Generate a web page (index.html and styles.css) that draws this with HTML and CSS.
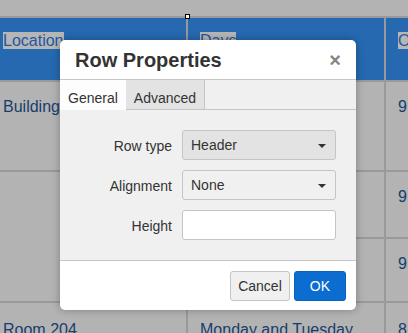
FILE: index.html
```html
<!DOCTYPE html>
<html lang="en">
<head>
    <meta charset="UTF-8">
    <meta name="viewport" content="width=device-width, initial-scale=1.0">
    <title>Row Properties</title>
    <link rel="stylesheet" href="styles.css">
</head>
<body>
    <div class="page">
        <table class="sheet">
            <tr class="headrow">
                <td class="c1"><span class="sel">Location</span></td>
                <td class="c2"><span class="sel">Days</span></td>
                <td class="c3"><span class="sel">O</span></td>
            </tr>
            <tr class="r1">
                <td>Building</td>
                <td></td>
                <td>9</td>
            </tr>
            <tr class="r2">
                <td rowspan="2"></td>
                <td></td>
                <td>9</td>
            </tr>
            <tr class="r3">
                <td></td>
                <td>9</td>
            </tr>
            <tr class="r4">
                <td>Room 204</td>
                <td>Monday and Tuesday</td>
                <td>8</td>
            </tr>
        </table>
        <div class="handle"></div>

        <div class="dialog">
            <div class="dlg-head">
                <h1 class="dlg-title">Row Properties</h1>
                <span class="close">&times;</span>
            </div>
            <div class="tabs">
                <div class="tab active">General</div>
                <div class="tab">Advanced</div>
            </div>
            <div class="dlg-body">
                <label class="lbl">Row type</label>
                <div class="select hover">Header<span class="caret"></span></div>
                <label class="lbl">Alignment</label>
                <div class="select">None<span class="caret"></span></div>
                <label class="lbl">Height</label>
                <div class="textbox"></div>
            </div>
            <div class="dlg-foot">
                <button class="btn">Cancel</button>
                <button class="btn primary">OK</button>
            </div>
        </div>
    </div>
</body>
</html>
```

FILE: styles.css
```css
body{
    margin: 0;
    background-color: #b3b3b3;
    font-family: "Liberation Sans", Arial, sans-serif;
    overflow: hidden;
}

.page{
    position: relative;
    height: 333px;
    padding-top: 16px;
    box-sizing: border-box;
}

.sheet{
    margin-left: -9px;
    border-collapse: separate;
    border-spacing: 0;
    border-top: 2px solid #999;
    table-layout: fixed;
    width: 600px;
    font-size: 16px;
    color: #183d6c;
}
.sheet td{
    border-right: 2px solid #999;
    border-bottom: 2px solid #999;
    padding: 16px 0 0 12px;
    vertical-align: top;
    line-height: 18px;
    white-space: nowrap;
    overflow: hidden;
}
.sheet .c1{ width: 183px; }
.sheet .c2{ width: 184px; }

.headrow td{
    background-color: #2669b1;
    height: 48px;
    padding-top: 14px;
    color: #1f58a0;
}
.sel{
    background-color: #b6b6b6;
}
.r1 td{ height: 72px; }
.r2 td{ height: 49px; }
.r3 td{ height: 46px; }
.r4 td{ height: 40px; padding-top: 18px; }

.handle{
    position: absolute;
    left: 185px;
    top: 14px;
    width: 3px;
    height: 3px;
    border: 1px solid #000;
    background: #fff;
}

.dialog{
    position: absolute;
    left: 60px;
    top: 40px;
    width: 296px;
    height: 270px;
    background: #fff;
    border-radius: 5px;
    box-shadow: 0 0 9px rgba(0,0,0,0.3);
    display: flex;
    flex-direction: column;
    overflow: hidden;
    color: #333;
}

.dlg-head{
    height: 39px;
    border-bottom: 1px solid #c5c5c5;
    display: flex;
    align-items: center;
    justify-content: space-between;
    padding: 0 15px 0 15px;
}
.dlg-title{
    margin: 0;
    font-size: 20px;
    font-weight: bold;
    color: #333;
    padding-top: 1px;
}
.close{
    font-size: 20px;
    font-weight: bold;
    color: #858585;
    line-height: 20px;
}

.tabs{
    display: flex;
    height: 29px;
    background: #f0f0f0;
    border-bottom: 1px solid #c5c5c5;
}
.tab{
    font-size: 14px;
    line-height: 16px;
    padding: 10px 8px 3px 8px;
    background: #e3e3e3;
    border-right: 1px solid #c5c5c5;
    color: #333;
}
.tab.active{
    background: #fdfdfd;
    border-right: none;
    height: 17px;
    margin-bottom: -1px;
    padding-bottom: 3px;
}

.dlg-body{
    flex: 1;
    background: #f0f0f0;
    display: grid;
    grid-template-columns: 1fr 154px;
    grid-auto-rows: 30px;
    column-gap: 10px;
    row-gap: 10px;
    padding: 20px 20px 0 20px;
    border-bottom: 1px solid #c5c5c5;
    font-size: 14px;
}
.lbl{
    text-align: right;
    align-self: center;
    padding-top: 1px;
}
.select{
    box-sizing: border-box;
    border: 1px solid #c5c5c5;
    border-radius: 3px;
    background: #f0f0f0;
    padding: 0 8px;
    line-height: 28px;
    position: relative;
}
.select.hover{
    background: #e3e3e3;
}
.caret{
    position: absolute;
    right: 9px;
    top: 13px;
    width: 0;
    height: 0;
    border-left: 4px solid transparent;
    border-right: 4px solid transparent;
    border-top: 4px solid #333;
}
.textbox{
    box-sizing: border-box;
    border: 1px solid #c5c5c5;
    border-radius: 3px;
    background: #fff;
    height: 30px;
}

.dlg-foot{
    height: 49px;
    display: flex;
    justify-content: flex-end;
    align-items: flex-start;
    gap: 4px;
    padding: 10px 10px 0 0;
    box-sizing: border-box;
}
.btn{
    font-family: "Liberation Sans", Arial, sans-serif;
    font-size: 14px;
    height: 30px;
    padding: 0 7px;
    border: 1px solid #c5c5c5;
    border-radius: 3px;
    background: #f0f0f0;
    color: #333;
}
.btn.primary{
    background: #0b6dcf;
    border-color: #0a62bb;
    color: #fff;
    padding: 0 15px;
}
```
